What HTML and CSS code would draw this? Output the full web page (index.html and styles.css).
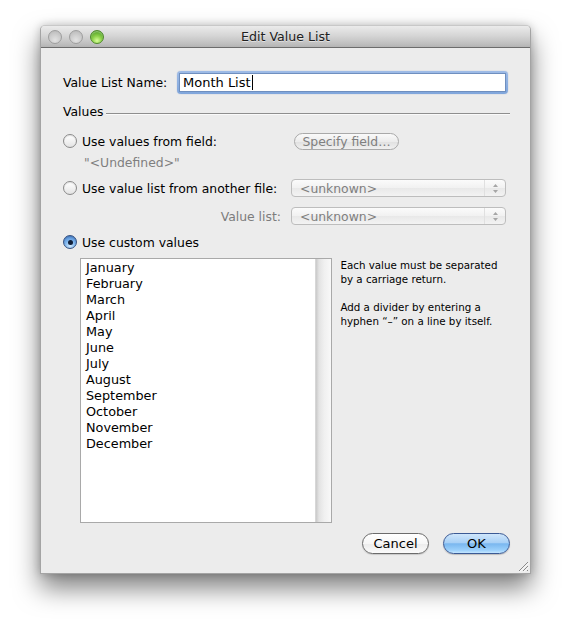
FILE: index.html
```html
<!DOCTYPE html>
<html>
<head>
<meta charset="utf-8">
<link rel="stylesheet" href="styles.css">
</head>
<body>
<div class="window">
  <div class="titlebar">
    <div class="lights">
      <span class="light off"></span>
      <span class="light off"></span>
      <span class="light green"></span>
    </div>
    <div class="title">Edit Value List</div>
  </div>
  <div class="content">
    <div class="name-row">
      <span class="name-label">Value List Name:</span>
      <div class="ring"><div class="field">Month List<span class="caret"></span></div></div>
    </div>
    <div class="group-head"><span>Values</span><span class="rule"></span></div>

    <div class="opt-row r1">
      <div class="opt"><span class="radio"></span><span>Use values from field:</span></div>
      <div class="pill-btn">Specify field…</div>
    </div>
    <div class="undef">"&lt;Undefined&gt;"</div>

    <div class="opt-row r2">
      <div class="opt"><span class="radio"></span><span>Use value list from another file:</span></div>
      <div class="popup"><span>&lt;unknown&gt;</span><span class="arrows"><svg width="7" height="11" viewBox="0 0 7 11"><path d="M3.5 1 L6 4 L1 4 Z M1 7 L6 7 L3.5 10 Z" fill="#a6a6a6"/></svg></span></div>
    </div>
    <div class="opt-row r3">
      <div class="opt right"><span class="grey">Value list:</span></div>
      <div class="popup"><span>&lt;unknown&gt;</span><span class="arrows"><svg width="7" height="11" viewBox="0 0 7 11"><path d="M3.5 1 L6 4 L1 4 Z M1 7 L6 7 L3.5 10 Z" fill="#a6a6a6"/></svg></span></div>
    </div>
    <div class="opt-row r4">
      <div class="opt"><span class="radio on"><span class="dot"></span></span><span>Use custom values</span></div>
    </div>

    <div class="custom">
      <div class="textarea">
        <div class="lines">
          <div>January</div><div>February</div><div>March</div><div>April</div>
          <div>May</div><div>June</div><div>July</div><div>August</div>
          <div>September</div><div>October</div><div>November</div><div>December</div>
        </div>
        <div class="track"></div>
      </div>
      <div class="help">
        <p>Each value must be separated by a carriage return.</p>
        <p>Add a divider by entering a hyphen “–” on a line by itself.</p>
      </div>
    </div>

    <div class="buttons">
      <div class="btn cancel">Cancel</div>
      <div class="btn ok">OK</div>
    </div>
  </div>
  <svg class="grip" width="12" height="12" viewBox="0 0 12 12">
    <path d="M11 2 L2 11 M11 6 L6 11 M11 10 L10 11" stroke="#8a8a8a" stroke-width="1"/>
    <path d="M11.8 2.8 L2.8 11.8 M11.8 6.8 L6.8 11.8" stroke="#fafafa" stroke-width="1"/>
  </svg>
</div>
</body>
</html>
```

FILE: styles.css
```css
html, body {
  margin: 0;
  padding: 0;
  background: #ffffff;
}
body {
  padding: 25px 0 55px 40px;
  font-family: "DejaVu Sans", "Liberation Sans", sans-serif;
  font-size: 12.4px;
  color: #000;
}
.window {
  position: relative;
  width: 491px;
  height: 549px;
  box-sizing: border-box;
  background: #ececec;
  border-radius: 5px 5px 0 0;
  border: 1px solid #a4a4a4;
  border-top-color: #c8c8c8;
  box-shadow: 0 14px 26px rgba(0,0,0,0.5), 0 0 8px rgba(0,0,0,0.2);
}
.titlebar {
  position: relative;
  height: 21px;
  border-bottom: 1px solid #6c6c6c;
  border-radius: 4px 4px 0 0;
  background: linear-gradient(#ebebeb, #d6d6d6 45%, #c2c2c2 80%, #b4b4b4);
  display: flex;
  align-items: center;
}
.lights {
  display: flex;
  gap: 7px;
  padding-left: 7px;
  padding-top: 1px;
}
.light {
  width: 14px;
  height: 14px;
  box-sizing: border-box;
  border-radius: 50%;
}
.light.off {
  border: 1px solid #9e9e9e;
  background: radial-gradient(circle at 50% 75%, #e2e2e2 0, #cfcfcf 45%, #b5b5b5 100%);
}
.light.green {
  border: 1px solid #4f8a2a;
  background: radial-gradient(circle at 50% 80%, #d8ff9a 0, #8fd24c 40%, #4f9e25 85%, #3f7f1c 100%);
  box-shadow: inset 0 1px 1px rgba(255,255,255,0.4);
}
.title {
  position: absolute;
  left: 0;
  right: 0;
  top: 3px;
  text-align: center;
  font-size: 12.6px;
  color: #202020;
  text-shadow: 0 1px 0 rgba(255,255,255,0.5);
}
.content {
  padding: 23px 20px 0 22px;
}
.name-row {
  display: flex;
  align-items: center;
  height: 23px;
}
.name-label {
  width: 114px;
}
.ring {
  width: 331px;
  height: 23px;
  box-sizing: border-box;
  padding: 2px;
  border-radius: 4px;
  background: linear-gradient(#9ebbe6, #80a6dc);
  box-shadow: 0 0 1px rgba(70,110,180,0.6);
}
.field {
  height: 19px;
  box-sizing: border-box;
  border: 1px solid #6f8fbf;
  background: #fff;
  padding: 0 0 0 3px;
  line-height: 17px;
  font-size: 13px;
  display: flex;
  align-items: center;
}
.caret {
  display: inline-block;
  width: 1px;
  height: 15px;
  background: #000;
  margin-left: 1px;
}
.group-head {
  display: flex;
  align-items: center;
  height: 16px;
  margin-top: 9px;
}
.rule {
  flex: 1;
  height: 1px;
  background: #8e8e8e;
  margin: 5px 0 0 3px;
  box-shadow: 0 1px 0 #fafafa;
}
.opt-row {
  display: grid;
  grid-template-columns: 228px 215px;
  align-items: center;
}
.r1 { height: 18px; margin-top: 13px; }
.r2 { height: 20px; margin-top: 7px; }
.r3 { height: 20px; margin-top: 8px; }
.r4 { height: 18px; margin-top: 7px; }
.opt {
  display: flex;
  align-items: center;
}
.opt.right {
  justify-content: flex-end;
  padding-right: 10px;
}
.grey { color: #7c7c7c; }
.radio {
  width: 14px;
  height: 14px;
  box-sizing: border-box;
  border-radius: 50%;
  border: 1px solid #8a8a8a;
  background: linear-gradient(#ffffff, #f2f2f2 50%, #e3e3e3);
  box-shadow: inset 0 1px 1px rgba(0,0,0,0.12);
  margin-right: 5px;
  display: flex;
  align-items: center;
  justify-content: center;
}
.radio.on {
  border-color: #35507f;
  background: radial-gradient(circle at 50% 80%, #d4ecff 0, #7db4ec 45%, #3c77c7 100%);
}
.dot {
  width: 5px;
  height: 5px;
  border-radius: 50%;
  background: #11203a;
}
.pill-btn {
  width: 105px;
  height: 17px;
  margin-left: 3px;
  box-sizing: border-box;
  border: 1px solid #a9a9a9;
  border-radius: 9px;
  background: linear-gradient(#fafafa, #ececec 50%, #e0e0e0 51%, #f0f0f0);
  color: #7f7f7f;
  text-align: center;
  line-height: 15px;
}
.undef {
  height: 16px;
  line-height: 16px;
  margin-top: 5px;
  padding-left: 21px;
  color: #7f7f7f;
}
.popup {
  width: 215px;
  height: 18px;
  box-sizing: border-box;
  border: 1px solid #bdbdbd;
  border-radius: 4px;
  background: linear-gradient(#fbfbfb, #f1f1f1 50%, #e8e8e8 51%, #f3f3f3);
  color: #7f7f7f;
  display: flex;
  align-items: center;
  justify-content: space-between;
  padding-left: 8px;
}
.arrows {
  width: 20px;
  height: 100%;
  border-left: 1px solid #e0e0e0;
  display: flex;
  align-items: center;
  justify-content: center;
}
.custom {
  display: flex;
  margin-top: 7px;
  height: 265px;
}
.textarea {
  width: 253px;
  height: 265px;
  margin-left: 17px;
  box-sizing: border-box;
  border: 1px solid #a9a9a9;
  background: #fff;
  display: flex;
}
.lines {
  flex: 1;
  padding: 1px 0 0 5px;
  font-size: 12.8px;
  line-height: 16px;
}
.track {
  width: 15px;
  background: linear-gradient(to right, #c9c9c9, #e3e3e3 20%, #f0f0f0 55%, #f8f8f8);
  border-left: 1px solid #d7d7d7;
}
.help {
  width: 170px;
  padding-left: 8px;
  font-size: 10.3px;
  line-height: 14px;
}
.help p {
  margin: 0 0 14px 0;
}
.buttons {
  display: flex;
  justify-content: flex-end;
  gap: 14px;
  margin-top: 10px;
}
.btn {
  width: 67px;
  height: 21px;
  box-sizing: border-box;
  border-radius: 11px;
  text-align: center;
  line-height: 19px;
  font-size: 13px;
}
.cancel {
  border: 1px solid #6b6b6b;
  background: linear-gradient(#ffffff, #f6f6f6 50%, #ebebeb 51%, #fbfbfb);
  box-shadow: 0 1px 1px rgba(0,0,0,0.15);
}
.ok {
  border: 1px solid #3b5a95;
  background: linear-gradient(#cfe6fb, #a8d0f6 45%, #7ab7ef 52%, #9bd0fb 85%, #c4e6ff);
  box-shadow: 0 1px 1px rgba(0,0,0,0.2);
}
.grip {
  position: absolute;
  right: 1px;
  bottom: 1px;
}
```
